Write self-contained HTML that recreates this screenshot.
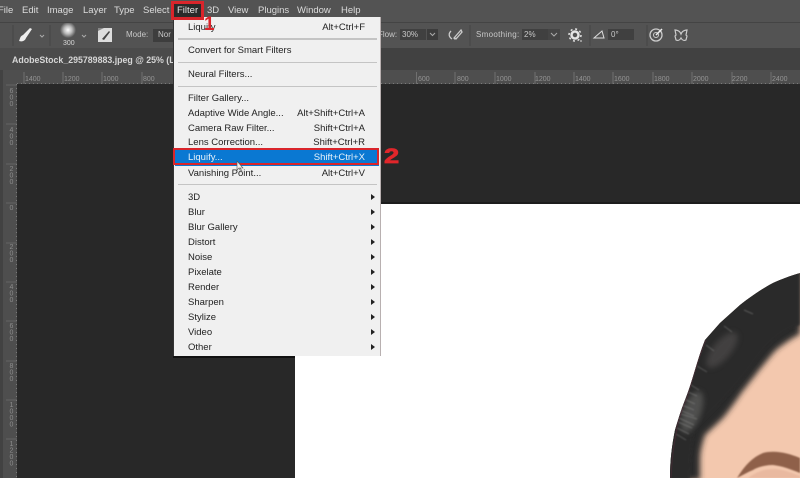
<!DOCTYPE html>
<html><head><meta charset="utf-8"><style>
html,body{margin:0;padding:0;background:#282828}
#p{position:relative;width:800px;height:478px;overflow:hidden;background:#282828;font-family:"Liberation Sans",sans-serif;filter:blur(.35px)}
#p div{position:absolute}
.t{white-space:nowrap;line-height:12px}
.m{color:#dcdcdc;font-size:9.5px;top:5px}
.o{color:#c8c8c8;font-size:8px;top:29px}
.r{color:#949494;font-size:7px;top:74px}
.v{color:#8c8c8c;font-size:7px;left:7px;width:8px;line-height:8px;writing-mode:vertical-rl;text-orientation:upright;letter-spacing:-.5px;white-space:nowrap}
.i{color:#222;font-size:9.5px;left:14px}
.s{color:#222;font-size:9.5px;right:15px}
.a{left:197px;width:0;height:0;border-left:4px solid #222;border-top:3px solid transparent;border-bottom:3px solid transparent}
.h{left:4px;width:199px;height:1px;background:#c4c4c4}
</style></head><body><div id="p">
<div style="left:0;top:0;width:800px;height:22px;background:#535353"></div>
<div style="left:0;top:22px;width:800px;height:1px;background:#444"></div>
<div style="left:0;top:23px;width:800px;height:25px;background:#535353"></div>
<div style="left:0;top:48px;width:800px;height:22px;background:#414141"></div>
<div style="left:0;top:48px;width:176px;height:22px;background:#4b4b4b"></div>
<div style="left:0;top:70px;width:800px;height:14px;background:#4e4e4e"></div>
<div style="left:0;top:84px;width:17px;height:394px;background:#4e4e4e"></div>
<div style="left:0;top:70px;width:3px;height:408px;background:#424242"></div>
<div style="left:295px;top:204px;width:505px;height:274px;background:#fff"></div>
<div style="left:295px;top:202px;width:505px;height:2px;background:#1c1c1c"></div>

<div class="t m" style="left:-2px">File</div>
<div class="t m" style="left:22px">Edit</div>
<div class="t m" style="left:47px">Image</div>
<div class="t m" style="left:83px">Layer</div>
<div class="t m" style="left:114px">Type</div>
<div class="t m" style="left:143px">Select</div>
<div class="t m" style="left:207px">3D</div>
<div class="t m" style="left:228px">View</div>
<div class="t m" style="left:258px">Plugins</div>
<div class="t m" style="left:297px">Window</div>
<div class="t m" style="left:341px">Help</div>
<div style="left:171px;top:1px;width:33px;height:19px;background:#2a2a2a"></div>
<div class="t m" style="left:177px;color:#e6e6e6">Filter</div>

<svg style="position:absolute;left:0;top:23px" width="800" height="25" viewBox="0 23 800 25">
<line x1="13" y1="25" x2="13" y2="46" stroke="#464646"/>
<line x1="50" y1="25" x2="50" y2="46" stroke="#464646"/>
<path d="M19 41c3 1 6 0 7-3l6-9-2-1-7 7c-3 1-3 4-4 6z" fill="#eee"/>
<path d="M40 35l2 2 2-2" fill="none" stroke="#aaa"/>
<defs><radialGradient id="g"><stop offset="0" stop-color="#fff"/><stop offset=".5" stop-color="#bbb"/><stop offset="1" stop-color="#555"/></radialGradient></defs>
<circle cx="68" cy="30" r="8" fill="url(#g)"/>
<path d="M82 35l2 2 2-2" fill="none" stroke="#aaa"/>
<rect x="98" y="28" width="14" height="14" fill="#ddd"/>
<path d="M102 39l7-8 1 1-6 8z" fill="#444"/>
<path d="M98 28h6l-6 3z" fill="#888"/>
<rect x="153" y="29" width="20" height="13" fill="#3d3d3d"/>
<rect x="400" y="29" width="26" height="11" fill="#404040"/>
<rect x="427" y="29" width="11" height="11" fill="#3c3c3c"/>
<path d="M430 33l2.500 2.500 2.500-2.500" fill="none" stroke="#aaa"/>
<path d="M461 30l-7 8 2 1 6-7zM451 31c-3 3-2 6 1 8M454 39l3-1" fill="none" stroke="#ccc" stroke-width="1.300"/>
<line x1="470" y1="25" x2="470" y2="46" stroke="#464646"/>
<rect x="522" y="29" width="26" height="11" fill="#404040"/>
<rect x="548" y="29" width="12" height="11" fill="#454545"/>
<path d="M551 33l3 3 3-3" fill="none" stroke="#aaa"/>
<circle cx="575" cy="35" r="3.500" fill="none" stroke="#e5e5e5" stroke-width="2.500"/>
<circle cx="575" cy="35" r="6" fill="none" stroke="#e5e5e5" stroke-width="1.500" stroke-dasharray="2 2.700"/>
<path d="M580 41h2" stroke="#ddd"/>
<line x1="590" y1="25" x2="590" y2="46" stroke="#464646"/>
<path d="M594 38h10l-2-7z" fill="none" stroke="#ddd"/>
<rect x="608" y="29" width="26" height="11" fill="#404040"/>
<line x1="647" y1="25" x2="647" y2="46" stroke="#464646"/>
<circle cx="656" cy="35" r="6" fill="none" stroke="#ccc" stroke-width="1.300"/>
<circle cx="656" cy="35" r="2.500" fill="none" stroke="#ccc"/>
<path d="M656 35l6-6" stroke="#eee" stroke-width="1.500"/>
<path d="M681 34c-1-3-4-4-6-4l1 5-1 1 1 4c2 1 4 0 5-2 1 2 3 3 5 2l1-4-1-1 1-5c-2 0-5 1-6 4z" fill="none" stroke="#ccc" stroke-width="1.200"/>
</svg>
<div class="t o" style="left:126px">Mode:</div>
<div class="t o" style="left:158px">Nor</div>
<div class="t o" style="left:378px">Flow:</div>
<div class="t o" style="left:402px">30%</div>
<div class="t o" style="left:476px;letter-spacing:.3px">Smoothing:</div>
<div class="t o" style="left:524px">2%</div>
<div class="t o" style="left:611px">0°</div>
<div class="t" style="left:63px;top:38px;font-size:7px;color:#d8d8d8">300</div>
<div class="t" style="left:12px;top:54px;font-size:8.800px;font-weight:bold;color:#d6d6d6">AdobeStock_295789883.jpeg @ 25% (La</div>

<svg style="position:absolute;left:0;top:70px" width="800" height="14"><path d="M24 2v12M63 2v12M102 2v12M142 2v12M416.500 2v12M455 2v12M495 2v12M535 2v12M574 2v12M613 2v12M653 2v12M692 2v12M732 2v12M771 2v12" stroke="#707070"/><line x1="17" y1="13.500" x2="800" y2="13.500" stroke="#7a7a7a" stroke-dasharray="1 3"/></svg>
<svg style="position:absolute;left:0;top:84px" width="17" height="394"><path d="M6 1h11M6 40h11M6 80h11M6 119h11M6 159h11M6 198h11M6 237h11M6 277h11M6 316h11M6 355h11" stroke="#646464"/><line x1="16.500" y1="0" x2="16.500" y2="394" stroke="#7a7a7a" stroke-dasharray="1 3"/></svg>
<div class="t r" style="left:25px">1400</div><div class="t r" style="left:64px">1200</div><div class="t r" style="left:103px">1000</div><div class="t r" style="left:143px">800</div>
<div class="t r" style="left:418px">600</div><div class="t r" style="left:457px">800</div><div class="t r" style="left:496px">1000</div><div class="t r" style="left:535px">1200</div><div class="t r" style="left:575px">1400</div><div class="t r" style="left:614px">1600</div><div class="t r" style="left:654px">1800</div><div class="t r" style="left:693px">2000</div><div class="t r" style="left:732px">2200</div><div class="t r" style="left:772px">2400</div>
<div class="v" style="top:88px">600</div><div class="v" style="top:127px">400</div><div class="v" style="top:166px">200</div><div class="v" style="top:205px">0</div><div class="v" style="top:244px">200</div><div class="v" style="top:284px">400</div><div class="v" style="top:323px">600</div><div class="v" style="top:363px">800</div><div class="v" style="top:402px">1000</div><div class="v" style="top:441px">1200</div>

<svg style="position:absolute;left:640px;top:270px" width="160" height="208" viewBox="640 270 160 208">
<defs>
<clipPath id="c"><path d="M800 273C790 276 782 279 773 283C760 290 750 297 740 305L720 323L705 340C701 350 698 360 695 370C692 380 689 390 685 400C681 410 678 420 675 430C672 445 670 460 670 478H800Z"/></clipPath>
<filter id="b" x="-20%" y="-20%" width="140%" height="140%"><feGaussianBlur stdDeviation="3"/></filter>
<filter id="b1"><feGaussianBlur stdDeviation=".7"/></filter>
<filter id="b2"><feGaussianBlur stdDeviation="1.200"/></filter>
</defs>
<g clip-path="url(#c)">
<rect x="660" y="265" width="145" height="215" fill="#f3c8ae"/>
<path d="M660 265H800V334C792 338 785 343 777 349C771 355 766 362 760 369L742 392C735 402 729 411 722 419L705 435C702 444 700 452 700 459V480H660Z" fill="#2c2a2a" filter="url(#b)"/>
<path d="M660 265H800V325C785 330 770 340 755 362C745 376 735 388 716 408L694 430C692 445 690 460 690 480H660Z" fill="#2b2929" filter="url(#b2)"/>
<ellipse cx="692" cy="412" rx="9" ry="22" fill="#5d5d5b" opacity=".75" filter="url(#b)" transform="rotate(20 692 412)"/>
<ellipse cx="722" cy="350" rx="9" ry="22" fill="#484746" opacity=".8" filter="url(#b)" transform="rotate(40 722 350)"/>
<g fill="none" stroke="#8c8c8a" stroke-width="1" filter="url(#b1)" opacity=".5">
<path d="M680 410l14 6M681 414l16 5M679 418l15 7M678 422l14 6M682 405l12 5M677 428l12 6M684 399l11 5M676 434l10 6M688 392l9 4M691 385l8 5M697 366l10 6M706 345l8 6M724 326l8 6M744 310l9 4"/>
</g>
<path d="M671 478C672 458 674 442 677 430M676 431C679 418 684 405 687 398C690 388 693 378 696 368C699 358 702 350 706 340" fill="none" stroke="#5a2b3b" stroke-width="1" opacity=".45"/>
<path d="M737 478C745 465 753 457 763 453C775 450 788 453 800 458V473C790 469 782 466 773 465C765 465 758 467 753 470C748 472 743 475 737 478Z" fill="#8f6049" filter="url(#b1)"/>
<path d="M748 478C756 472 764 469 773 469C783 469 792 473 800 476V478Z" fill="#e9b9a0" filter="url(#b1)"/>
</g>
</svg>

<div style="left:173px;top:356px;width:122px;height:2px;background:#111"></div>
<div style="left:173px;top:17px;width:207px;height:339px;background:#f0f0f0;box-shadow:1px 0 0 #b8b0b0;border-left:1px solid #333;box-sizing:border-box">
<div class="t i" style="top:5px">Liquify</div><div class="t s" style="top:5px">Alt+Ctrl+F</div>
<div class="h" style="top:21px;height:2px"></div>
<div class="t i" style="top:28px">Convert for Smart Filters</div>
<div class="h" style="top:45px"></div>
<div class="t i" style="top:52px">Neural Filters...</div>
<div class="h" style="top:69px"></div>
<div class="t i" style="top:76px">Filter Gallery...</div>
<div class="t i" style="top:91px">Adaptive Wide Angle...</div><div class="t s" style="top:91px">Alt+Shift+Ctrl+A</div>
<div class="t i" style="top:106px">Camera Raw Filter...</div><div class="t s" style="top:106px">Shift+Ctrl+A</div>
<div class="t i" style="top:120px">Lens Correction...</div><div class="t s" style="top:120px">Shift+Ctrl+R</div>
<div style="left:1px;top:132px;width:204px;height:17px;background:#0a78d2"></div>
<div class="t i" style="top:135px;color:#e8f2fa">Liquify...</div><div class="t s" style="top:135px;color:#e8f2fa">Shift+Ctrl+X</div>
<div class="t i" style="top:151px">Vanishing Point...</div><div class="t s" style="top:151px">Alt+Ctrl+V</div>
<div class="h" style="top:167px"></div>
<div class="t i" style="top:175px">3D</div><div class="a" style="top:177px"></div>
<div class="t i" style="top:190px">Blur</div><div class="a" style="top:192px"></div>
<div class="t i" style="top:205px">Blur Gallery</div><div class="a" style="top:207px"></div>
<div class="t i" style="top:220px">Distort</div><div class="a" style="top:222px"></div>
<div class="t i" style="top:235px">Noise</div><div class="a" style="top:237px"></div>
<div class="t i" style="top:250px">Pixelate</div><div class="a" style="top:252px"></div>
<div class="t i" style="top:265px">Render</div><div class="a" style="top:267px"></div>
<div class="t i" style="top:280px">Sharpen</div><div class="a" style="top:282px"></div>
<div class="t i" style="top:295px">Stylize</div><div class="a" style="top:297px"></div>
<div class="t i" style="top:310px">Video</div><div class="a" style="top:312px"></div>
<div class="t i" style="top:325px">Other</div><div class="a" style="top:327px"></div>
</div>

<div style="left:171px;top:1px;width:33px;height:19px;border:3px solid #d9252b;box-sizing:border-box"></div>
<div style="left:173px;top:148px;width:206px;height:17px;border:2.500px solid #d9252b;box-sizing:border-box"></div>
<div class="t" style="left:204px;top:15px;font-size:19px;line-height:20px;font-weight:bold;color:#d9252b">1</div>
<div class="t" style="left:384px;top:147px;font-size:21px;line-height:20px;font-weight:bold;color:#e0262b;-webkit-text-stroke:.7px #e0262b;transform:scaleX(1.3);transform-origin:left top">2</div>
<svg style="position:absolute;left:235px;top:160px" width="10" height="14"><path d="M2 1v9l2-2 2 4 1-1-2-3h3z" fill="#eee" stroke="#555" stroke-width=".6"/></svg>
</div></body></html>
